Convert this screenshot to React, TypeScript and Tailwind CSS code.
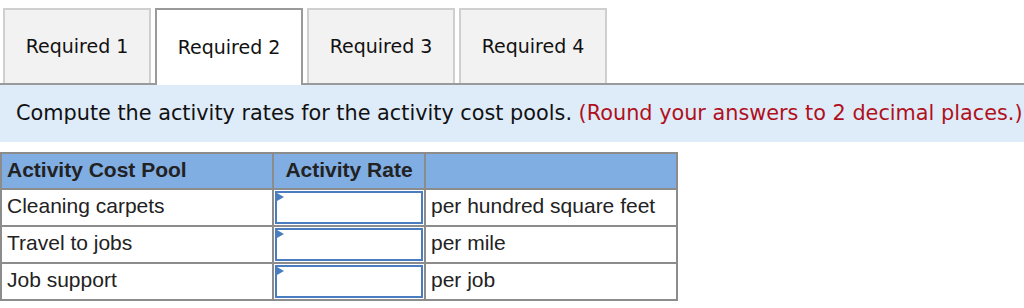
import React from 'react';

const tabs = ['Required 1', 'Required 2', 'Required 3', 'Required 4'];

const rows = [
  { pool: 'Cleaning carpets', unit: 'per hundred square feet' },
  { pool: 'Travel to jobs', unit: 'per mile' },
  { pool: 'Job support', unit: 'per job' },
];

const RateInput: React.FC = () => (
  <div className="relative h-[33px] w-[148px] border-2 border-[#4a7cc0] bg-white">
    <svg className="absolute left-0 top-0" width="7" height="8" viewBox="0 0 7 8">
      <polygon points="0,0 7,4 0,8" fill="#4a7cc0" />
    </svg>
  </div>
);

const App: React.FC = () => {
  const active = 1;

  return (
    <div className="h-[308px] w-[1024px] overflow-hidden bg-white">
      <div className="flex gap-1 border-b-2 border-[#9a9a9a] pl-[3px] pt-2" style={{ fontFamily: '"DejaVu Sans", Verdana, sans-serif' }}>
        {tabs.map((tab, i) => (
          <div
            key={tab}
            className={`flex h-[75px] w-[148px] items-center justify-center text-[19px] text-[#111] ${
              i === active
                ? '-mb-[2px] h-[77px] border-2 border-b-0 border-[#9a9a9a] bg-white'
                : 'border-2 border-b-0 border-[#cfcfcf] bg-[#f2f2f2]'
            }`}
          >
            {tab}
          </div>
        ))}
      </div>

      <div
        className="flex h-[57px] items-center overflow-hidden whitespace-nowrap bg-[#deebf8] pl-4 text-[20.8px] text-[#111]"
        style={{ fontFamily: '"DejaVu Sans", Verdana, sans-serif' }}
      >
        Compute the activity rates for the activity cost pools.&nbsp;
        <span className="text-[#b0101c]">(Round your answers to 2 decimal places.)</span>
      </div>

      <table
        className="mt-[10px] w-[676px] table-fixed border-collapse border-2 border-[#8c8c8c] text-[21px] leading-[24px] text-[#222]"
        style={{ fontFamily: '"Liberation Sans", Arial, sans-serif' }}
      >
        <colgroup>
          <col className="w-[272px]" />
          <col className="w-[152px]" />
          <col className="w-[252px]" />
        </colgroup>
        <thead>
          <tr className="h-[36px] bg-[#80ade2]">
            <th className="border-2 border-[#8c8c8c] px-[5px] pb-[2px] text-left font-bold">Activity Cost Pool</th>
            <th className="border-2 border-[#8c8c8c] px-1 pb-[2px] text-center font-bold">Activity Rate</th>
            <th className="border-2 border-[#8c8c8c]"></th>
          </tr>
        </thead>
        <tbody>
          {rows.map(row => (
            <tr key={row.pool} className="h-[37px]">
              <td className="border-2 border-[#8c8c8c] px-[5px] pb-[3px]">{row.pool}</td>
              <td className="border-2 border-[#8c8c8c] p-0 align-middle">
                <div className="flex justify-center">
                  <RateInput />
                </div>
              </td>
              <td className="border-2 border-[#8c8c8c] px-[5px] pb-[3px]">{row.unit}</td>
            </tr>
          ))}
        </tbody>
      </table>
    </div>
  );
};

export default App;
